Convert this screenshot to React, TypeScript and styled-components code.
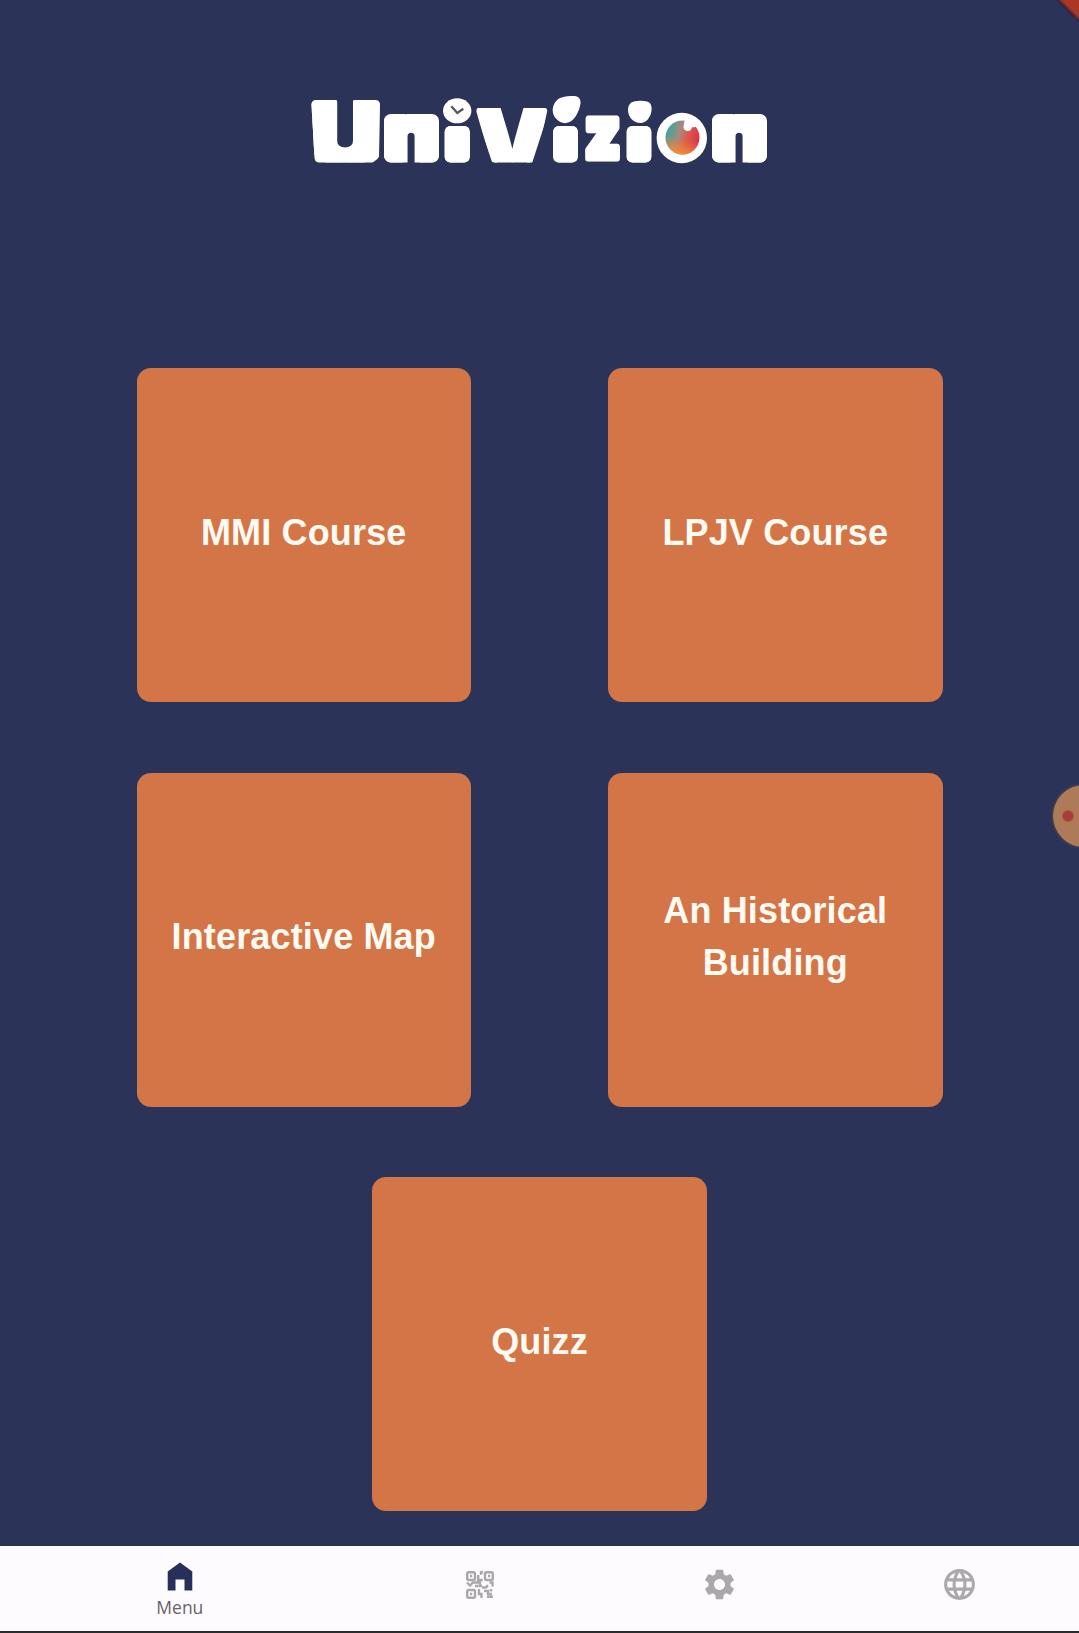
import React from "react";
import styled, { createGlobalStyle } from "styled-components";
import { MdLanguage, MdSettings } from "react-icons/md";

const GlobalStyle = createGlobalStyle`
  * { box-sizing: border-box; }
  body { margin: 0; background: #2b3458; }
`;

const Screen = styled.div`
  position: relative;
  display: flex;
  flex-direction: column;
  width: 1079px;
  height: 1633px;
  overflow: hidden;
  background: #2b3458;
  font-family: "Liberation Sans", Arial, sans-serif;
`;

const Header = styled.header`
  display: flex;
  justify-content: center;
  padding-top: 90px;
  height: 368px;
  flex: none;
`;

const Cards = styled.main`
  display: flex;
  flex-wrap: wrap;
  justify-content: center;
  align-content: flex-start;
  gap: 70.5px 137px;
  flex: 1;
`;

const Card = styled.button`
  display: flex;
  align-items: center;
  justify-content: center;
  width: 334.5px;
  height: 334px;
  padding: 0 30px 5px;
  border: 0;
  border-radius: 14px;
  background: #d37546;
  color: #fffaf2;
  font: bold 36px/52px "Liberation Sans", Arial, sans-serif;
  letter-spacing: 0.15px;
  text-align: center;
`;

const NavBar = styled.nav`
  display: flex;
  height: 87px;
  flex: none;
  background: #fefbff;
  border-bottom: 2px solid #2c2b2e;
`;

const NavItem = styled.a<{ $active?: boolean }>`
  display: flex;
  flex-direction: column;
  align-items: center;
  flex: ${(p) => (p.$active ? 1.5 : 1)} 1 0;
  padding-top: ${(p) => (p.$active ? 16 : 20)}px;
  color: ${(p) => (p.$active ? "#26305a" : "#aba8ac")};
`;

const NavLabel = styled.span`
  margin-top: 4px;
  font: 17.5px/24px "Open Sans", "Noto Sans", sans-serif;
  color: #656367;
`;

const RecordBubble = styled.div`
  position: absolute;
  left: 1053px;
  top: 785px;
  width: 62px;
  height: 62px;
  border-radius: 50%;
  background: radial-gradient(circle at 15px 31px, #a93c34 0 4.5px, #ad7b57 6.5px);
  box-shadow: 0 0 3px #80503f;
`;

const CornerRibbon = styled.div`
  position: absolute;
  right: 0;
  top: 0;
  width: 24px;
  height: 24px;
  background: linear-gradient(45deg, transparent 50%, #33243f 55%, #a93724 65%);
`;

const LogoSvg = styled.svg`
  display: block;
  overflow: visible;
  text {
    font-family: Inter, "Liberation Sans", sans-serif;
    font-weight: 900;
    fill: #fff;
    stroke: #fff;
    stroke-linejoin: round;
  }
`;

type LetterProps = { char: string; x: number; y: number; size: number; sx: number; stroke: number; clip?: string };

function Letter({ char, x, y, size, sx, stroke, clip }: LetterProps) {
  return (
    <g clipPath={clip ? `url(#${clip})` : undefined}>
      <text transform={`translate(${x} ${y}) scale(${sx} 1)`} textAnchor="middle" fontSize={size} strokeWidth={stroke}>
        {char}
      </text>
    </g>
  );
}

function Logo() {
  return (
    <LogoSvg width="470" height="80" viewBox="305 90 470 80" role="img" aria-label="UniVizion">
      <defs>
        <clipPath id="block1">
          <path d="M316 100H375Q380 100 380 105L379 158Q378.500 162.500 374 162.500H319Q315 162.500 314.500 158L311.500 105Q311.500 100 316 100Z" />
        </clipPath>
        <clipPath id="arch1"><rect x="384" y="114" width="55" height="48.500" rx="7" /></clipPath>
        <clipPath id="arch2"><rect x="712" y="114" width="55" height="48.500" rx="7" /></clipPath>
        <clipPath id="wedge">
          <path d="M479 108H544Q548 108 547 112L537 159Q536 162.500 532 162.500H495Q491 162.500 490 159L476.500 112Q476 108 479 108Z" />
        </clipPath>
        <clipPath id="stem1"><rect x="444.5" y="126" width="25.5" height="36.5" rx="6" /></clipPath>
        <clipPath id="stem2"><rect x="553" y="126" width="25" height="36.5" rx="6" /></clipPath>
        <clipPath id="stem3"><rect x="626.5" y="126" width="25" height="36.5" rx="6" /></clipPath>
        <linearGradient id="iris" x1="0" y1="0.35" x2="1" y2="0.65">
          <stop offset="0" stopColor="#35a6a5" />
          <stop offset="0.38" stopColor="#a58b80" />
          <stop offset="0.62" stopColor="#dc5a4c" />
          <stop offset="1" stopColor="#d92e4b" />
        </linearGradient>
        <linearGradient id="glow" x1="0.5" y1="0.5" x2="0.4" y2="1">
          <stop offset="0" stopColor="#ef7c32" stopOpacity="0" />
          <stop offset="1" stopColor="#f1923a" />
        </linearGradient>
      </defs>
      <Letter char="U" x={345} y={165} size={86} sx={1.26} stroke={7.5} clip="block1" />
      <Letter char="n" x={411} y={162.500} size={87} sx={1.26} stroke={8} clip="arch1" />
      <Letter char="i" x={457.2} y={166} size={80} sx={1.5} stroke={10} clip="stem1" />
      <Letter char="V" x={512} y={176} size={96} sx={1} stroke={5} clip="wedge" />
      <Letter char="i" x={565.5} y={166} size={80} sx={1.5} stroke={10} clip="stem2" />
      <Letter char="z" x={602.5} y={158} size={72} sx={0.84} stroke={7} />
      <Letter char="i" x={639} y={166} size={80} sx={1.5} stroke={10} clip="stem3" />
      <Letter char="o" x={682} y={157} size={66} sx={1} stroke={4} />
      <Letter char="n" x={739} y={162.500} size={87} sx={1.26} stroke={8} clip="arch2" />

      <ellipse cx="457.2" cy="110.8" rx="14.2" ry="12.5" fill="#fff" />
      <path d="M451.300 106.200l6 6.800 6-4.300" fill="none" stroke="#55565f" strokeWidth="2.300" />
      <path d="M559 98.500c4-2.300 10-3 15.500-2.400 4.500.6 6.500 3.400 6 7.400-1 7-6 19-14.500 19.600-7.500.5-13.500-6.500-13.300-13 .1-4.600 2.500-9.300 6.300-11.600z" fill="#fff" />
      <path d="M634 101.500c4-1 9-1 13 0 4 1 5 5 4.500 9-.8 7-5.500 12.500-11 12.500-7 0-12.500-6-12.500-13 0-4.500 2-7.500 6-8.500z" fill="#fff" />

      <circle cx="681.8" cy="138" r="25.200" fill="#fff" />
      <circle cx="682.5" cy="137.500" r="17" fill="url(#iris)" />
      <circle cx="682.5" cy="137.500" r="17" fill="url(#glow)" />
      <path d="M685 118l-1.500 8.500c-.3 3 2.500 5 5 4.500 2.500-.400 3-2 3.500-4 2 .8 4 0 5-2l1-5z" fill="#fff" />
    </LogoSvg>
  );
}

function HomeIcon() {
  return (
    <svg width="26" height="29" viewBox="0 0 26 29" fill="currentColor">
      <path d="M13 0.500L25.300 9.500V28.500H17.500V17.500H8.500V28.500H0.700V9.500Z" />
    </svg>
  );
}

function QrIcon() {
  return (
    <svg width="38" height="38" viewBox="-5 -5 38 38" fill="none" stroke="currentColor" strokeWidth="2.400">
      <rect x="1.200" y="1.200" width="7.800" height="7.800" rx="1.500" />
      <rect x="19" y="1.200" width="7.800" height="7.800" rx="1.500" />
      <rect x="1.200" y="19" width="7.800" height="7.800" rx="1.500" />
      <path d="M4 5h2.200M22 5h2.200M4 23h2.200M17 1.200h-2v2.500M12.200 4v5h4.500M1 11.500l3 3 3-3h7v3.500h2M9 15h3.500M16 16.500h4l2-2.500M23.500 11.500h3v4M13 18v5h2.500v4M18 20h4v3h4M25 18v2.500M21 25.700h6" />
    </svg>
  );
}

const destinations = ["MMI Course", "LPJV Course", "Interactive Map", "An Historical Building", "Quizz"];

export default function App() {
  return (
    <>
      <GlobalStyle />
      <Screen>
        <Header>
          <Logo />
        </Header>
        <Cards>
          {destinations.map((name) => (
            <Card key={name}>{name}</Card>
          ))}
        </Cards>
        <NavBar>
          <NavItem $active>
            <HomeIcon />
            <NavLabel>Menu</NavLabel>
          </NavItem>
          <NavItem>
            <QrIcon />
          </NavItem>
          <NavItem>
            <MdSettings size={37} />
          </NavItem>
          <NavItem>
            <MdLanguage size={37} />
          </NavItem>
        </NavBar>
        <RecordBubble />
        <CornerRibbon />
      </Screen>
    </>
  );
}
